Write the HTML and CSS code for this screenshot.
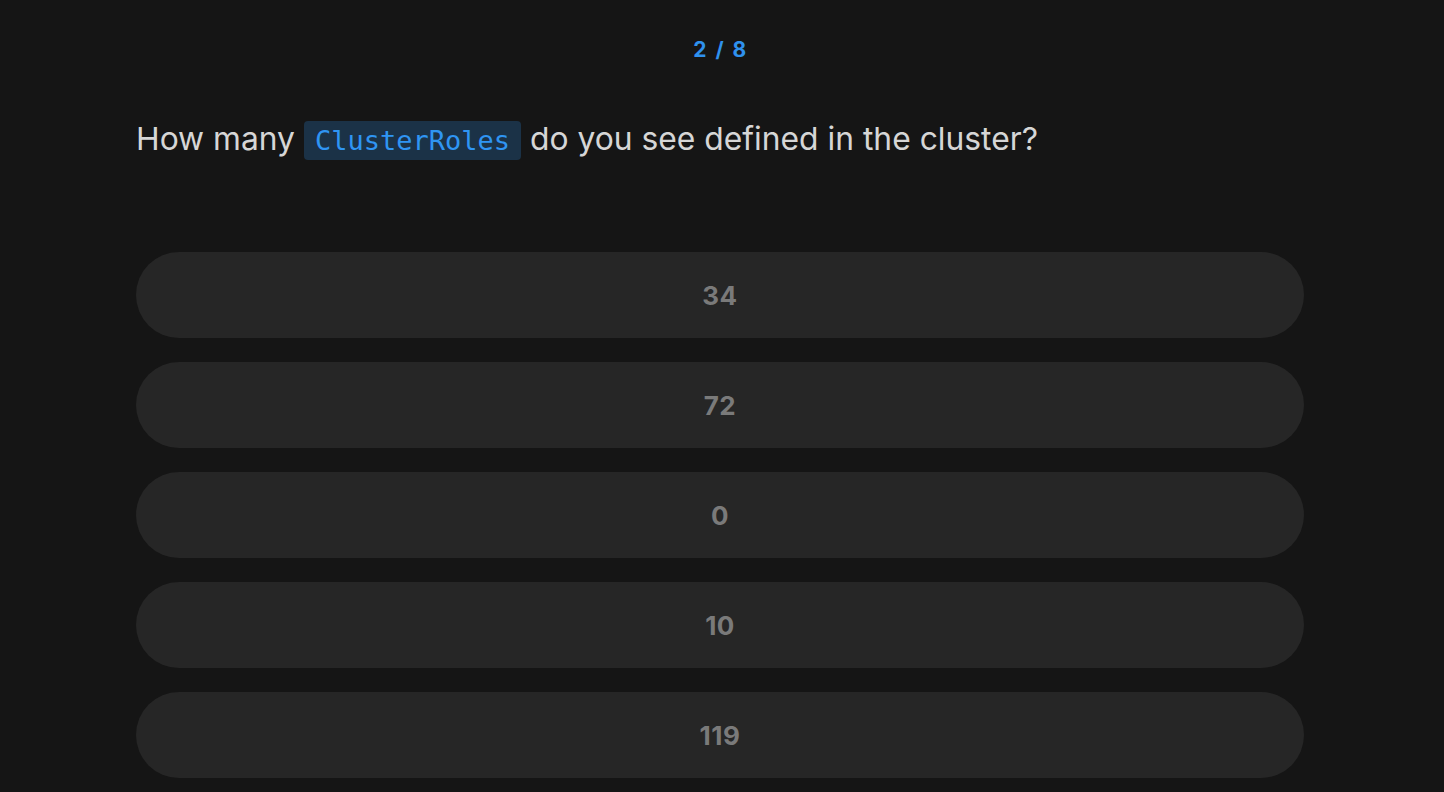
FILE: index.html
```html
<!DOCTYPE html>
<html>
<head>
<meta charset="utf-8">
<link rel="stylesheet" href="styles.css">
</head>
<body>
<main class="quiz">
  <div class="counter">2 / 8</div>
  <h1 class="question">How many <code class="code">ClusterRoles</code> do you see defined in the cluster?</h1>
  <div class="options">
    <button class="option">34</button>
    <button class="option">72</button>
    <button class="option">0</button>
    <button class="option">10</button>
    <button class="option">119</button>
  </div>
</main>
</body>
</html>
```
FILE: styles.css
```css
html, body {
  margin: 0;
  padding: 0;
  background: #151515;
}
body {
  font-family: Inter, "Noto Sans", sans-serif;
  color: #d6d6d6;
}
.quiz {
  width: 1168px;
  margin-left: 136px;
  padding-top: 36px;
}
.counter {
  text-align: center;
  color: #2f91ee;
  font-weight: 700;
  font-size: 21px;
  line-height: 28px;
  word-spacing: 3px;
  letter-spacing: 0.5px;
}
.question {
  margin: 53px 0 0 0;
  font-size: 31.8px;
  font-weight: 400;
  line-height: 44px;
  color: #d6d6d6;
}
.code {
  font-family: "DejaVu Sans Mono", monospace;
  font-size: 27px;
  color: #2f95f3;
  background: #1b3247;
  border-radius: 4px;
  padding: 4px 11px;
}
.options {
  margin-top: 89px;
  display: flex;
  flex-direction: column;
  gap: 24px;
}
.option {
  height: 86px;
  border: none;
  border-radius: 43px;
  background: #262626;
  color: #7a7a7a;
  font-family: Inter, "Noto Sans", sans-serif;
  font-weight: 700;
  font-size: 26px;
  letter-spacing: 0.5px;
  cursor: pointer;
}
```
